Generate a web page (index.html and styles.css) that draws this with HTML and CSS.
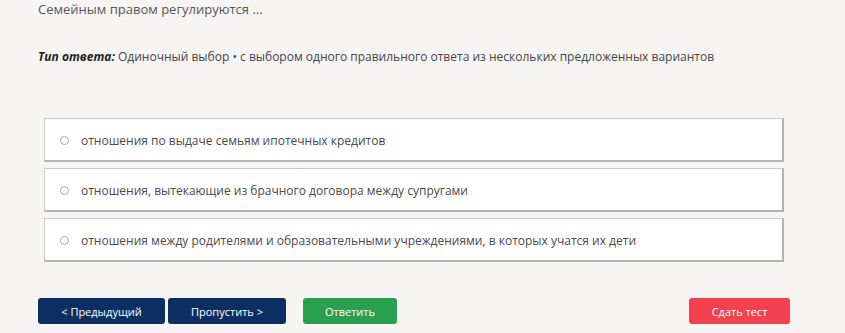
FILE: index.html
```html
<!DOCTYPE html>
<html lang="ru">
<head>
<meta charset="utf-8">
<title>Тест</title>
<link rel="stylesheet" href="styles.css">
</head>
<body>
<div class="page">
  <div class="question">Семейным правом регулируются ...</div>
  <div class="answer-type"><b><i>Тип ответа:</i></b> Одиночный выбор • с выбором одного правильного ответа из нескольких предложенных вариантов</div>
  <div class="options">
    <label class="option"><span class="radio"></span><span>отношения по выдаче семьям ипотечных кредитов</span></label>
    <label class="option"><span class="radio"></span><span>отношения, вытекающие из брачного договора между супругами</span></label>
    <label class="option"><span class="radio"></span><span>отношения между родителями и образовательными учреждениями, в которых учатся их дети</span></label>
  </div>
  <div class="actions">
    <button class="btn btn-navy btn-prev">&lt; Предыдущий</button>
    <button class="btn btn-navy btn-skip">Пропустить &gt;</button>
    <button class="btn btn-green btn-answer">Ответить</button>
    <button class="btn btn-red btn-finish">Сдать тест</button>
  </div>
</div>
</body>
</html>
```
FILE: styles.css
```css
html, body {
  margin: 0;
  padding: 0;
  background: #f7f5f3;
}
body {
  font-family: "Open Sans", "Noto Sans", sans-serif;
  color: #444;
}
.page {
  padding-left: 38px;
  width: 752px;
}
.question {
  font-size: 13px;
  line-height: 18px;
  color: #555;
  margin-top: 0;
}
.answer-type {
  margin-top: 31px;
  font-size: 12px;
  line-height: 16px;
  color: #444;
}
.answer-type b {
  color: #222;
}
.options {
  margin-top: 53px;
  margin-left: 6px;
  width: 740px;
  display: flex;
  flex-direction: column;
  gap: 6px;
}
.option {
  box-sizing: border-box;
  height: 44px;
  background: #fff;
  border: 1px solid #c9c9c9;
  border-right: 2px solid #b3b3b3;
  border-bottom: 2px solid #b3b3b3;
  display: flex;
  align-items: center;
  padding-left: 15px;
  padding-top: 2px;
  gap: 12px;
  font-size: 12px;
  color: #4a4a4a;
}
.radio {
  box-sizing: border-box;
  width: 9px;
  height: 9px;
  border: 1px solid #a8a8a8;
  border-radius: 50%;
  background: #fff;
  flex: none;
}
.actions {
  margin-top: 36px;
  display: flex;
  align-items: center;
}
.btn {
  height: 26px;
  border: none;
  border-radius: 3px;
  color: #fff;
  font-family: "Open Sans", "Noto Sans", sans-serif;
  font-size: 11px;
  padding: 0;
  box-sizing: border-box;
}
.btn-navy { background: #0c2f63; }
.btn-green { background: #28a04f; }
.btn-red { background: #f5414f; }
.btn-prev { width: 127px; }
.btn-skip { width: 118px; margin-left: 3px; }
.btn-answer { width: 94px; margin-left: 17px; }
.btn-finish { width: 101px; margin-left: auto; }
```
